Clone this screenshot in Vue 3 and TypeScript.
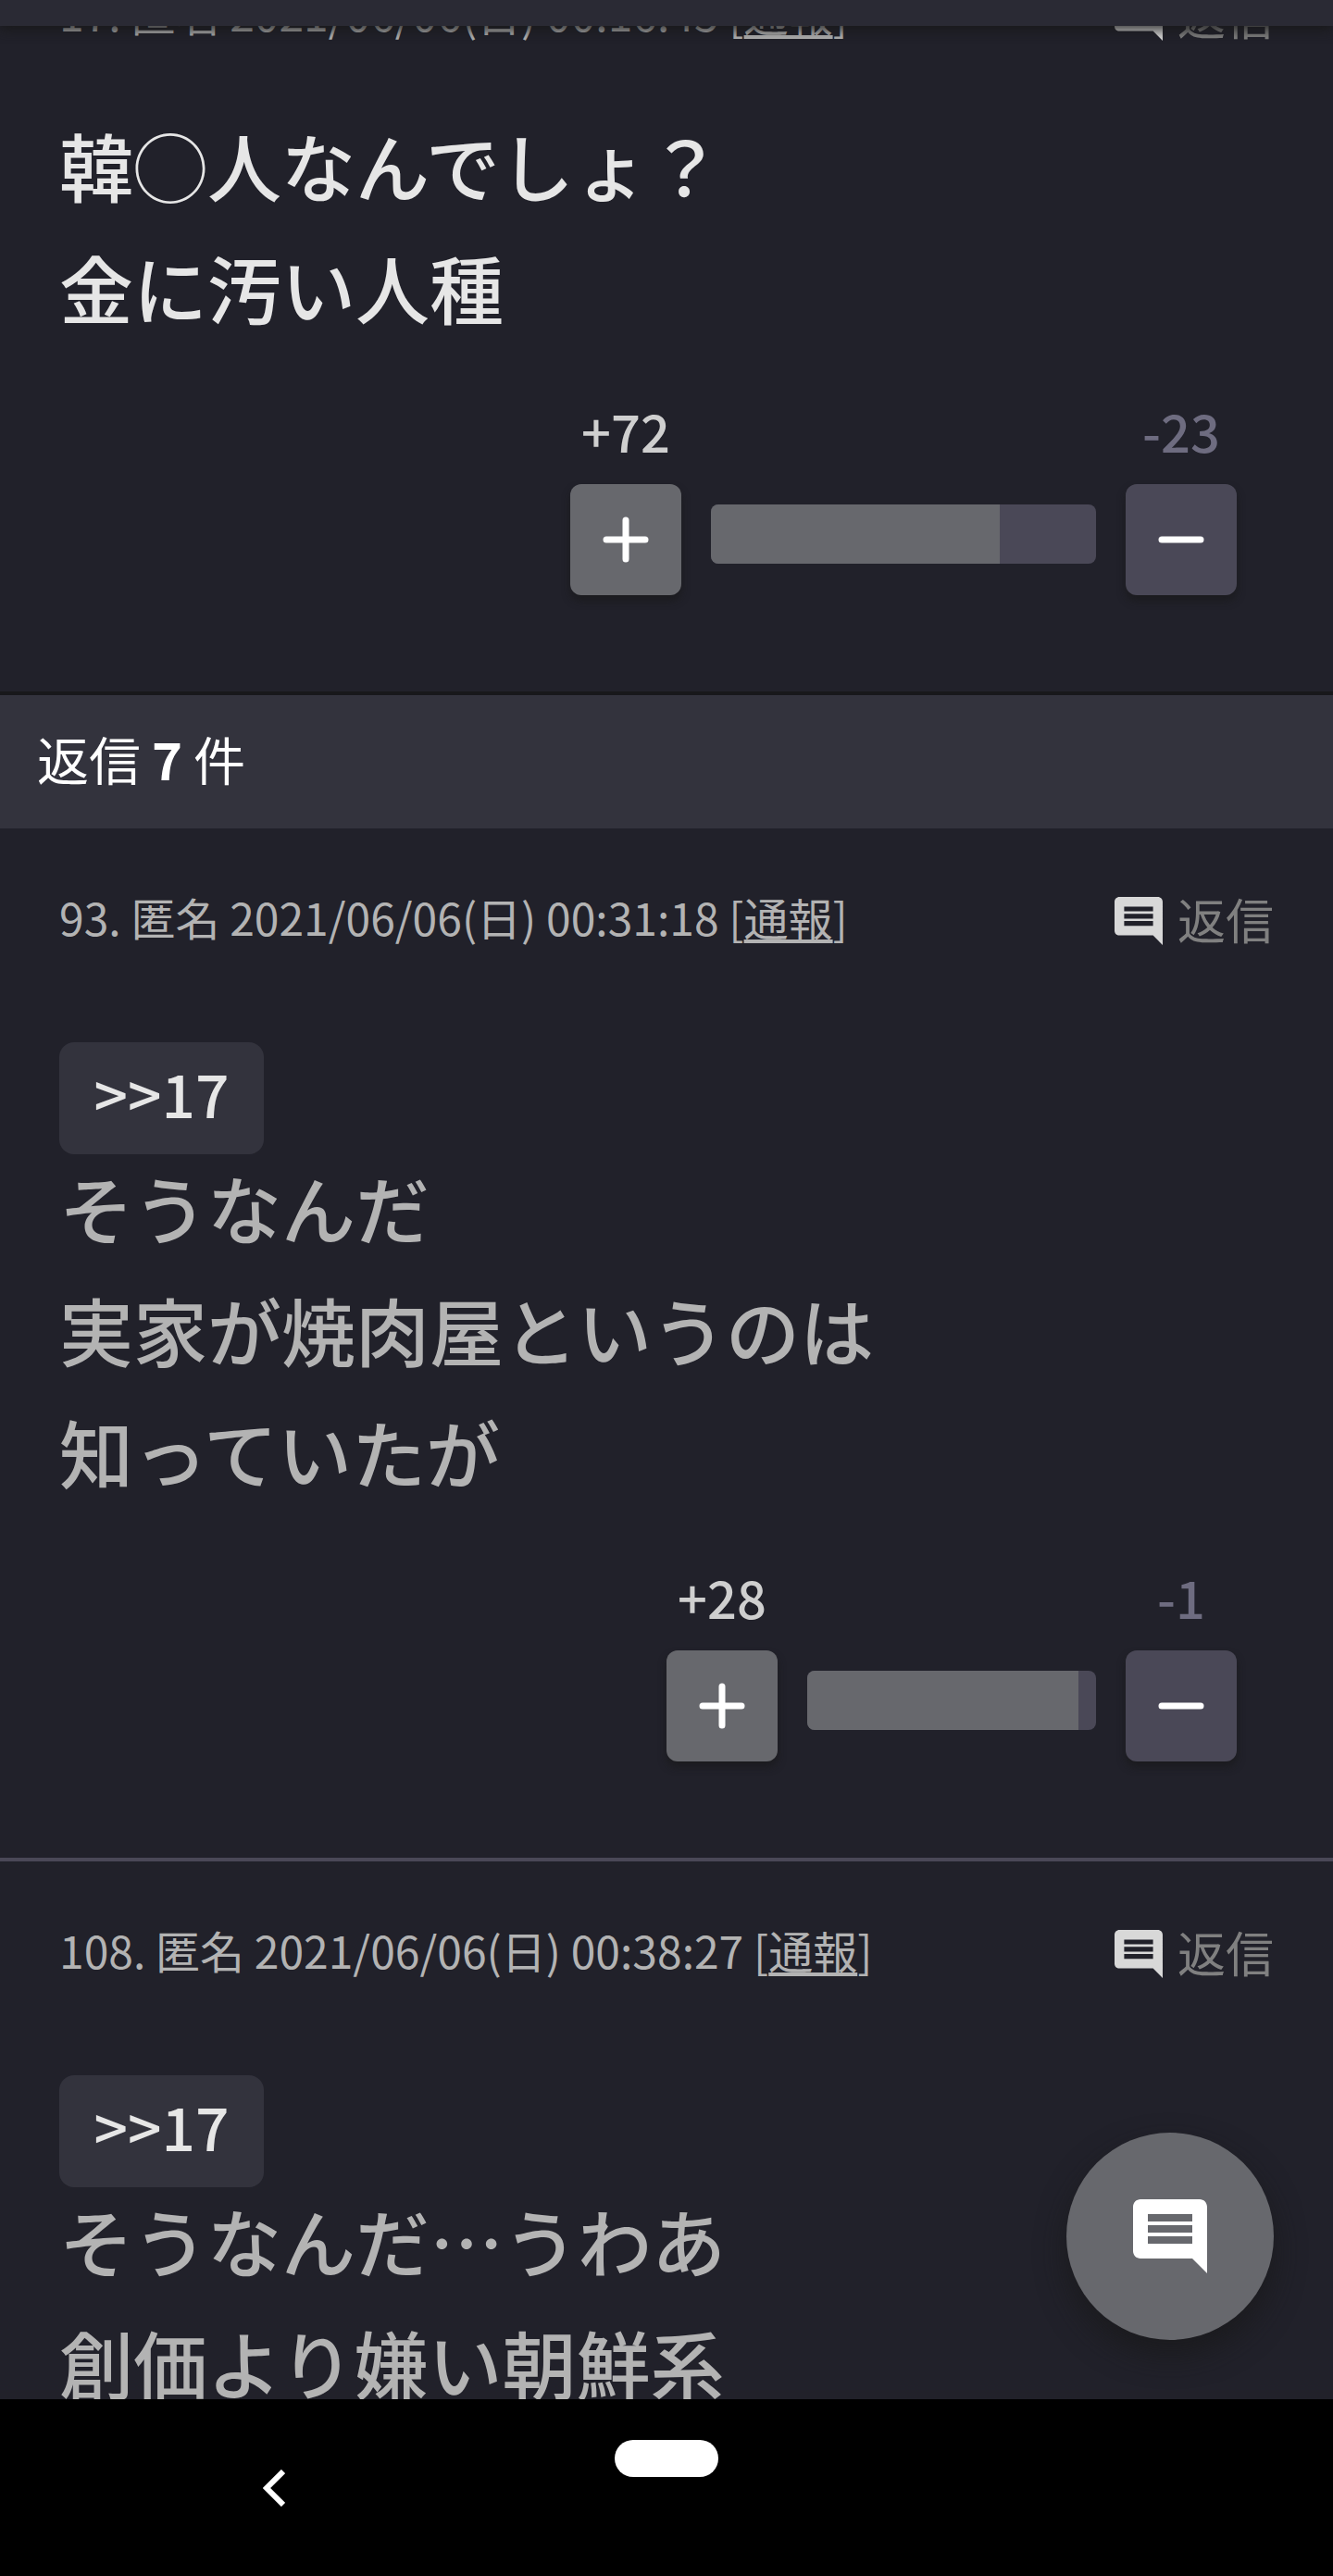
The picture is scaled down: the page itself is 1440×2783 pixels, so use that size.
<script setup lang="ts">
interface Post {
  id: number
  time: string
  quote?: string
  lines: string[]
  plus: number
  minus: number
  barWidth: number
  ratio: number
}

const root: Post = {
  id: 17,
  time: '2021/06/06(日) 00:16:45',
  lines: ['韓◯人なんでしょ？', '金に汚い人種'],
  plus: 72,
  minus: 23,
  barWidth: 416,
  ratio: 75,
}

const replies: Post[] = [
  {
    id: 93,
    time: '2021/06/06(日) 00:31:18',
    quote: '>>17',
    lines: ['そうなんだ', '実家が焼肉屋というのは', '知っていたが'],
    plus: 28,
    minus: 1,
    barWidth: 312,
    ratio: 94,
  },
  {
    id: 108,
    time: '2021/06/06(日) 00:38:27',
    quote: '>>17',
    lines: ['そうなんだ…うわあ', '創価より嫌い朝鮮系'],
    plus: 0,
    minus: 0,
    barWidth: 312,
    ratio: 50,
  },
]

const posts: Post[] = [root, ...replies]

const commentPath =
  'M21.99 4c0-1.1-.89-2-1.99-2H4c-1.1 0-2 .9-2 2v12c0 1.1.9 2 2 2h14l4 4-.01-18zM18 14H6v-2h12v2zm0-3H6V9h12v2zm0-3H6V6h12v2z'
</script>

<template>
  <div class="screen">
    <header class="appbar"></header>
    <main class="feed">
      <div class="scroll">
        <template v-for="post in posts" :key="post.id">
          <article class="post" :class="{ root: !post.quote }">
            <div class="meta">
              <p class="info">
                {{ post.id }}. 匿名 {{ post.time }} [<a href="#">通報</a>]
              </p>
              <button class="reply" type="button">
                <svg viewBox="2 2 20 20" aria-hidden="true"><path :d="commentPath" /></svg>
                <span>返信</span>
              </button>
            </div>
            <div v-if="post.quote" class="quote-row">
              <a class="quote" href="#">{{ post.quote }}</a>
            </div>
            <p v-for="line in post.lines" :key="line" class="line">{{ line }}</p>
            <div class="votes">
              <div class="vote up">
                <span class="count">+{{ post.plus }}</span>
                <button type="button" aria-label="プラス">
                  <svg viewBox="0 0 50 50" aria-hidden="true"><path d="M25 4v42M4 25h42" /></svg>
                </button>
              </div>
              <div class="bar" :style="{ width: post.barWidth + 'px' }">
                <div class="fill" :style="{ width: post.ratio + '%' }"></div>
              </div>
              <div class="vote down">
                <span class="count">-{{ post.minus }}</span>
                <button type="button" aria-label="マイナス">
                  <svg viewBox="0 0 50 50" aria-hidden="true"><path d="M4 25h42" /></svg>
                </button>
              </div>
            </div>
          </article>
          <h2 v-if="!post.quote" class="replies-title">
            <span>返信</span><b>7</b><span>件</span>
          </h2>
        </template>
      </div>
      <button class="fab" type="button" aria-label="コメントする">
        <svg viewBox="2 2 20 20" aria-hidden="true"><path :d="commentPath" /></svg>
      </button>
    </main>
    <nav class="navbar">
      <button class="back" type="button" aria-label="戻る">
        <svg viewBox="0 0 24 40" aria-hidden="true"><path d="M22 2L4 20l18 18" /></svg>
      </button>
      <button class="home" type="button" aria-label="ホーム"></button>
    </nav>
  </div>
</template>

<style>
body {
  background: #000;
}
</style>

<style scoped>
* {
  box-sizing: border-box;
}
p,
h2 {
  margin: 0;
}
button {
  border: 0;
  padding: 0;
  background: none;
  color: inherit;
  font: inherit;
}
.screen {
  display: flex;
  flex-direction: column;
  height: 100vh;
  overflow: hidden;
  background: #21212a;
  color: #b3b3b3;
  font-family: 'Noto Sans CJK JP', sans-serif;
}
.appbar {
  position: relative;
  z-index: 1;
  flex: none;
  height: 28px;
  background: #2a2a34;
  box-shadow: 0 4px 14px rgba(24, 24, 24, 0.9);
}
.feed {
  position: relative;
  flex: 1;
  min-height: 0;
  overflow: hidden;
}
.scroll {
  margin-top: -110px;
}
.post {
  border-bottom: 4px solid #4a4857;
  padding: 64px 64px 104px;
}
.post.root {
  border-color: #18181b;
}
.meta {
  display: flex;
  justify-content: space-between;
  height: 72px;
}
.info {
  font-size: 48px;
  line-height: 62px;
  font-weight: 400;
  white-space: pre;
}
.info a {
  color: inherit;
  text-decoration-thickness: 4px;
  text-underline-offset: 4px;
}
.reply {
  display: flex;
  align-items: center;
  gap: 16px;
  color: #808080;
  font-size: 52px;
  line-height: 68px;
}
.reply span {
  padding-bottom: 4px;
}
.reply svg {
  width: 52px;
  height: 52px;
  fill: #d8d8d8;
}
.quote-row {
  display: flex;
  height: 206px;
  padding-top: 95px;
}
.quote {
  flex: none;
  width: 221px;
  height: 121px;
  border-radius: 16px;
  background: #33333d;
  color: #e6e6e6;
  font-size: 64px;
  font-weight: 500;
  line-height: 108px;
  text-align: center;
  text-decoration: none;
}
.line {
  font-size: 80px;
  font-weight: 500;
  line-height: 132px;
}
.root .line {
  color: #e6e6e6;
}
.root .meta {
  margin-bottom: 57px;
}
.votes {
  display: flex;
  justify-content: flex-end;
  align-items: flex-end;
  gap: 32px;
  margin: 54px 40px 0 0;
}
.root .votes {
  margin-top: 52px;
}
.vote {
  display: flex;
  flex-direction: column;
  align-items: center;
  gap: 20px;
  width: 120px;
  color: #cfcfcf;
}
.vote.down {
  color: #6e6c80;
}
.count {
  font-size: 56px;
  font-weight: 500;
  line-height: 76px;
}
.vote button {
  display: flex;
  align-items: center;
  justify-content: center;
  width: 120px;
  height: 120px;
  border-radius: 12px;
  background: #67686d;
  box-shadow: 0 6px 8px rgba(24, 24, 24, 0.6);
}
.vote.down button {
  background: #4a4857;
}
.vote svg {
  width: 50px;
  height: 50px;
  fill: none;
  stroke: #fff;
  stroke-width: 7px;
  stroke-linecap: round;
}
.bar {
  height: 64px;
  margin-bottom: 34px;
  border-radius: 8px;
  background: #4a4857;
  overflow: hidden;
}
.fill {
  height: 100%;
  background: #67686d;
}
.replies-title {
  display: flex;
  gap: 12px;
  height: 144px;
  padding-left: 40px;
  background: #33333d;
  color: #fff;
  font-size: 56px;
  font-weight: 400;
  line-height: 136px;
}
.fab {
  position: absolute;
  right: 64px;
  bottom: 64px;
  display: flex;
  align-items: center;
  justify-content: center;
  width: 224px;
  height: 224px;
  border-radius: 50%;
  background: #67686d;
  box-shadow: 0 16px 32px rgba(24, 24, 24, 0.7);
}
.fab svg {
  width: 80px;
  height: 80px;
  fill: #fff;
}
.navbar {
  display: grid;
  grid-template-columns: 1fr 112px 1fr;
  flex: none;
  height: 191px;
  padding-top: 44px;
  background: #000;
}
.back {
  display: flex;
  align-items: center;
  justify-content: center;
  justify-self: center;
  width: 72px;
  height: 104px;
  margin-right: 72px;
}
.back svg {
  width: 24px;
  height: 40px;
  fill: none;
  stroke: #fff;
  stroke-width: 6px;
}
.home {
  height: 40px;
  border-radius: 20px;
  background: #fff;
}
</style>
